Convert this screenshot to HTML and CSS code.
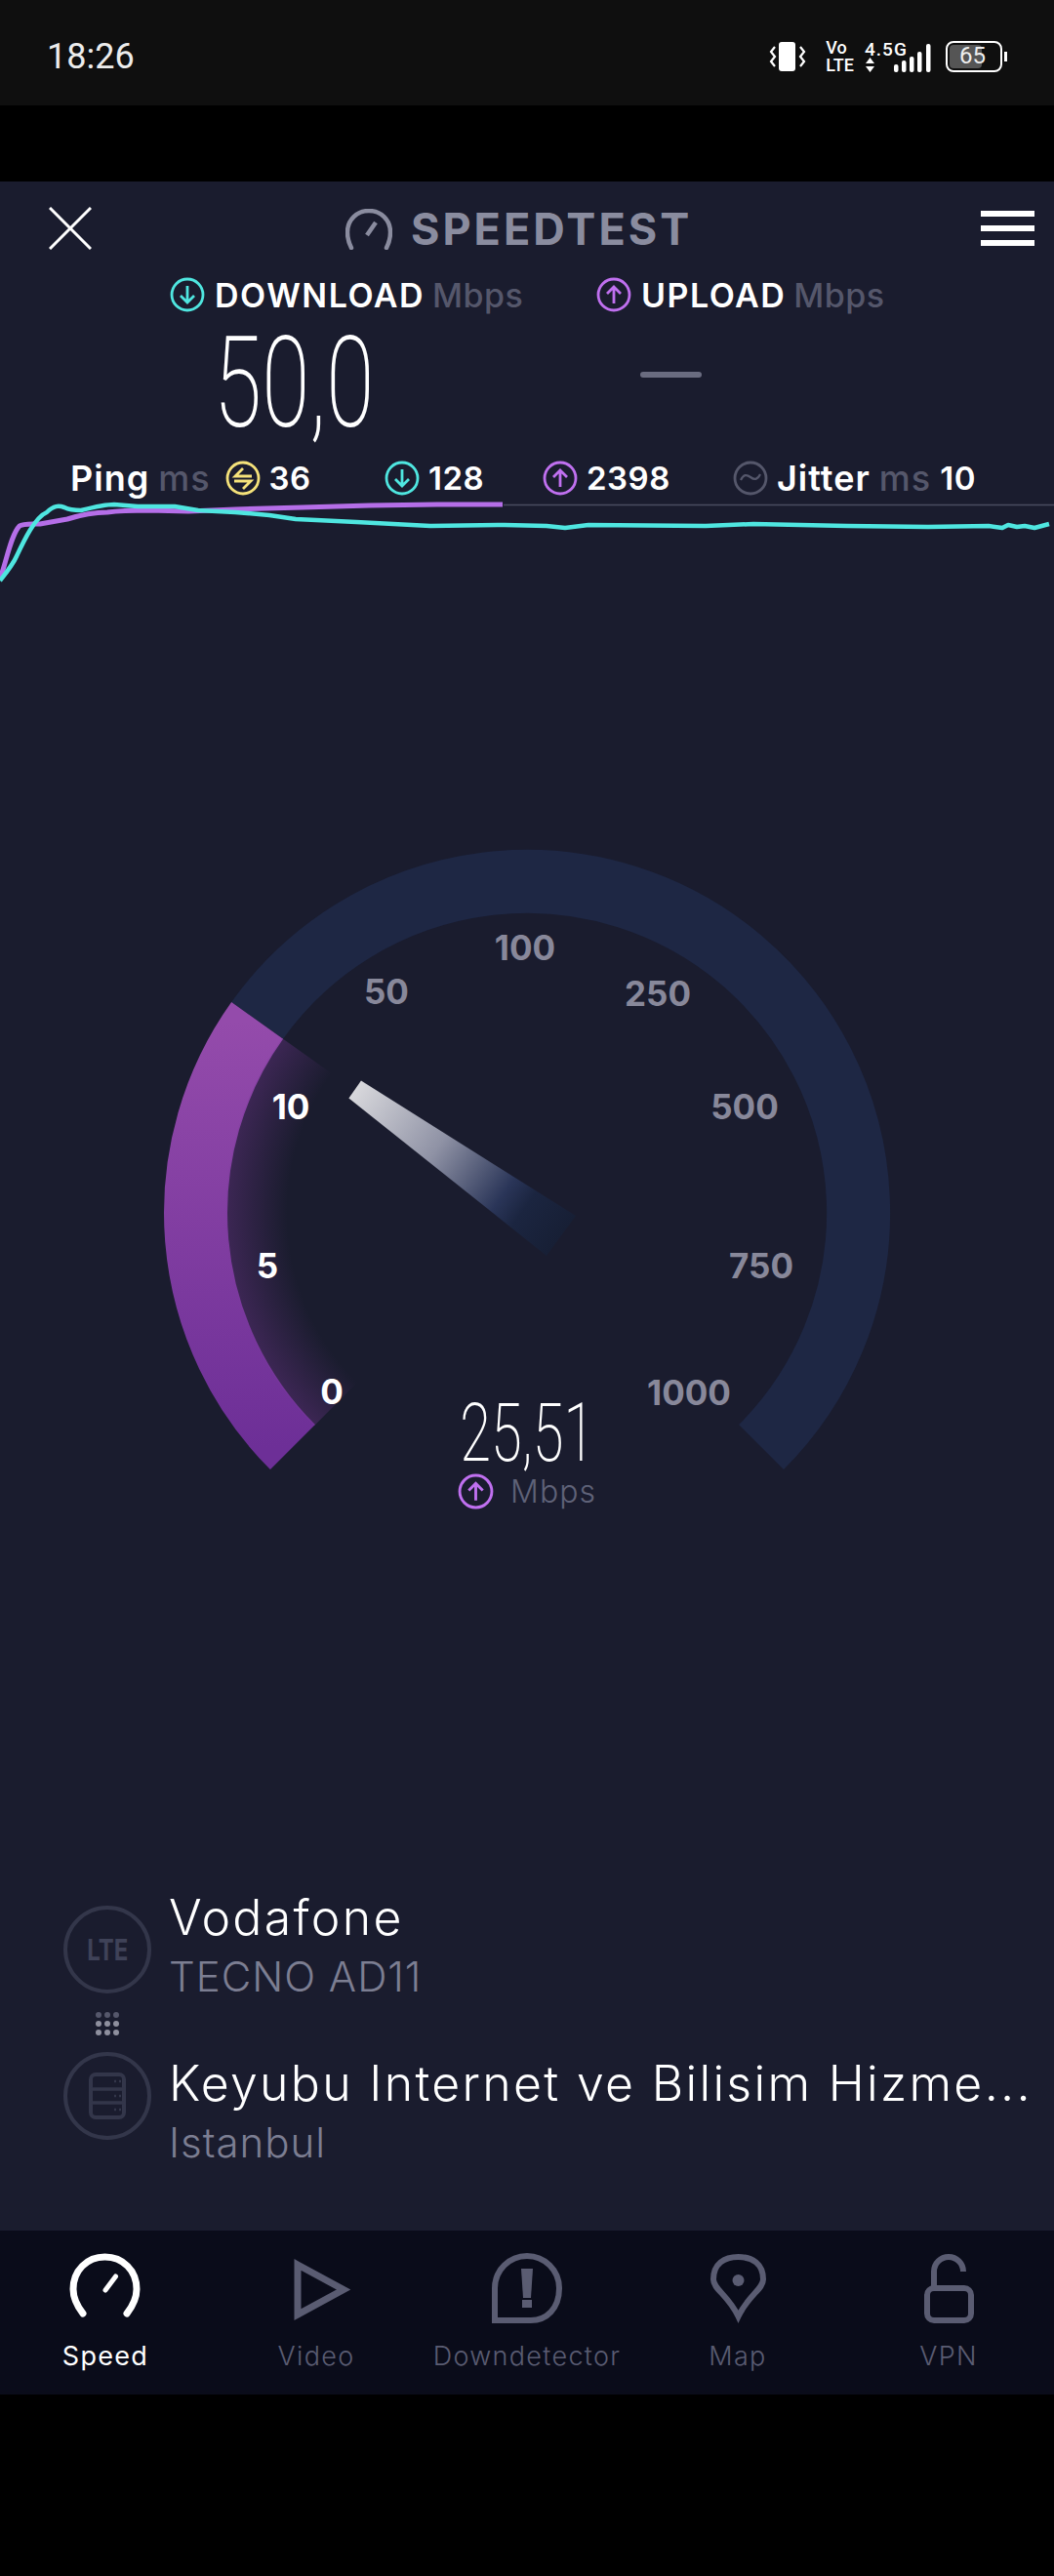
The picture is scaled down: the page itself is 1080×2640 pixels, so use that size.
FILE: index.html
```html
<!DOCTYPE html>
<html lang="en">
<head>
  <meta charset="UTF-8">
  <meta name="viewport" content="width=device-width, initial-scale=1.0">
  <title>Speedtest</title>
  <link rel="stylesheet" href="styles.css">
</head>
<body>
  <svg class="defs" width="0" height="0">
    <symbol id="ic-down" viewBox="0 0 36 36">
      <circle cx="18" cy="18" r="16" fill="none" stroke="currentColor" stroke-width="2.8"/>
      <path d="M18 9v17M11 19l7 7 7-7" fill="none" stroke="currentColor" stroke-width="2.8"/>
    </symbol>
    <symbol id="ic-up" viewBox="0 0 36 36">
      <circle cx="18" cy="18" r="16" fill="none" stroke="currentColor" stroke-width="2.8"/>
      <path d="M18 27V10M11 17l7-7 7 7" fill="none" stroke="currentColor" stroke-width="2.8"/>
    </symbol>
  </svg>

  <!-- Status bar -->
  <div class="status-bar">
    <span class="clock">18:26</span>
    <div class="status-icons">
      <svg class="ic-vibrate" width="38" height="32" viewBox="0 0 38 32">
        <rect x="10" y="1" width="17" height="30" rx="3" fill="#fff"/>
        <path d="M6 6L2 11l4 5-4 5 4 5M32 6l4 5-4 5 4 5-4 5" fill="none" stroke="#fff" stroke-width="2.2"/>
      </svg>
      <div class="stack">
        <span>Vo</span>
        <span>LTE</span>
      </div>
      <div class="net">
        <span>4.5G</span>
        <div class="net-low">
          <svg width="9" height="15" viewBox="0 0 9 15">
            <path d="M4.5 0L9 6H0zM0 9h9l-4.5 6z" fill="#fff"/>
          </svg>
          <svg class="ic-signal" width="38" height="29" viewBox="0 0 38 29">
            <g fill="#fff">
              <rect x="0" y="21" width="4.5" height="8" rx="2"/>
              <rect x="8" y="17" width="4.5" height="12" rx="2"/>
              <rect x="16" y="13" width="4.5" height="16" rx="2"/>
              <rect x="24" y="8" width="4.5" height="21" rx="2"/>
              <rect x="33" y="0" width="4.5" height="29" rx="2"/>
            </g>
          </svg>
        </div>
      </div>
      <div class="battery">
        <div class="battery-fill"></div>
        <span class="battery-num">65</span>
      </div>
      <div class="battery-nub"></div>
    </div>
  </div>
  <div class="gap"></div>

  <div class="app">
    <!-- Header -->
    <div class="header">
      <svg class="ic-close" width="44" height="44" viewBox="0 0 44 44">
        <path d="M1 1l42 42M43 1L1 43" stroke="#fff" stroke-width="3"/>
      </svg>
      <div class="title">
        <svg width="48" height="42" viewBox="0 0 48 42">
          <path d="M6 40C3 34 2 29 2 24 2 11 12 2 24 2s22 9 22 22c0 5-1 10-4 16" fill="none" stroke="#8a8c9f" stroke-width="4.5" stroke-linecap="round"/>
          <path d="M31 14l-9 13" stroke="#8a8c9f" stroke-width="4.5"/>
        </svg>
        <span>SPEEDTEST</span>
      </div>
      <div class="menu">
        <div></div>
        <div></div>
        <div></div>
      </div>
    </div>

    <!-- Download / upload -->
    <div class="speeds">
      <div class="speed-col down-col">
        <div class="speed-label">
          <svg class="cyan" width="36" height="36"><use href="#ic-down"/></svg>
          <b>DOWNLOAD</b><span>Mbps</span>
        </div>
        <div class="big-num">50,0</div>
      </div>
      <div class="speed-col up-col">
        <div class="speed-label">
          <svg class="purple" width="36" height="36"><use href="#ic-up"/></svg>
          <b>UPLOAD</b><span>Mbps</span>
        </div>
        <div class="dash"></div>
      </div>
    </div>

    <!-- Ping row -->
    <div class="stats">
      <div class="stat">
        <b class="word">Ping</b><span>ms</span>
        <svg class="yellow" width="36" height="36" viewBox="0 0 36 36">
          <circle cx="18" cy="18" r="16" fill="none" stroke="currentColor" stroke-width="2.8"/>
          <path d="M27 16H10l8-8M9 21h17l-8 8" fill="none" stroke="currentColor" stroke-width="2.8"/>
        </svg>
        <b>36</b>
      </div>
      <div class="stat">
        <svg class="cyan" width="36" height="36"><use href="#ic-down"/></svg>
        <b>128</b>
      </div>
      <div class="stat">
        <svg class="purple" width="36" height="36"><use href="#ic-up"/></svg>
        <b>2398</b>
      </div>
      <div class="stat">
        <svg class="grey" width="36" height="36" viewBox="0 0 36 36">
          <circle cx="18" cy="18" r="16" fill="none" stroke="currentColor" stroke-width="2.8"/>
          <path d="M8 20c3-6 6-6 10-3s7 3 10-3" fill="none" stroke="currentColor" stroke-width="2.2"/>
        </svg>
        <b class="word">Jitter</b><span>ms</span><b>10</b>
      </div>
    </div>

    <!-- Graph -->
    <svg class="graph" width="1080" height="92" viewBox="0 508 1080 92">
      <path d="M516 517.5H1080" stroke="#4a4c60" stroke-width="1.5"/>
      <path d="M0 593C6 578 11 548 20 539 24 536 34 537 41 537L69 532C85 527 100 525 110 525 125 523 140 523 152 523L193 524 241 522 310 520 379 518 448 517 515 517" fill="none" stroke="#b56ee8" stroke-width="5" stroke-linejoin="round"/>
      <path d="M0 595C8 585 14 577 17 570 25 553 36 530 48 525 55 518 60 518 66 520 72 523 78 523 83 523 95 520 108 517 117 517L141 519 179 519 203 523 241 525 276 528 303 532 324 533 365 535 441 539 517 538 560 539 579 541 603 538 723 539 772 537 868 539 951 540 1013 539 1027 541 1033 538 1042 540 1050 539 1060 541 1075 537" fill="none" stroke="#4fe6e0" stroke-width="4.5" stroke-linejoin="round"/>
    </svg>

    <!-- Gauge -->
    <div class="gauge">
      <svg width="1080" height="960" viewBox="0 0 1080 960">
        <defs>
          <linearGradient id="arcFill" x1="0" y1="0" x2="0" y2="1">
            <stop offset="0" stop-color="#944bab"/>
            <stop offset="1" stop-color="#6d2f97"/>
          </linearGradient>
          <radialGradient id="arcGlow" gradientUnits="userSpaceOnUse" cx="540" cy="643" r="307">
            <stop offset="0.8" stop-color="#7d3a9c" stop-opacity="0"/>
            <stop offset="1" stop-color="#7d3a9c" stop-opacity="0.34"/>
          </radialGradient>
          <linearGradient id="needleFill" gradientUnits="userSpaceOnUse" x1="364" y1="516" x2="575" y2="666">
            <stop offset="0" stop-color="#d8d8dc"/>
            <stop offset="0.4" stop-color="#8f92a5"/>
            <stop offset="0.72" stop-color="#2a3558"/>
            <stop offset="0.82" stop-color="#1b2540"/>
            <stop offset="1" stop-color="#171f35"/>
          </linearGradient>
        </defs>
        <path d="M263.6 445.9A339.5 339.5 0 1 1 780.06 883.06" fill="none" stroke="#1e2744" stroke-width="65"/>
        <path d="M299.94 883.06A339.5 339.5 0 0 1 263.6 445.9" fill="none" stroke="url(#arcFill)" stroke-width="65"/>
        <path d="M349 834A270 270 0 0 1 320 486" fill="none" stroke="url(#arcGlow)" stroke-width="76"/>
        <polygon points="370,507.5 357.4,525.4 560,687 590,646" fill="url(#needleFill)"/>
        <g class="ticks">
          <text x="298" y="547" class="on">10</text>
          <text x="274" y="710" class="on">5</text>
          <text x="340" y="839" class="on">0</text>
          <text x="396" y="429">50</text>
          <text x="538" y="384">100</text>
          <text x="674" y="431">250</text>
          <text x="763" y="547">500</text>
          <text x="780" y="710">750</text>
          <text x="706" y="840">1000</text>
        </g>
      </svg>
      <div class="reading">
        <div class="reading-num">25,51</div>
        <div class="reading-unit">
          <svg class="purple" width="37" height="37"><use href="#ic-up"/></svg>
          <span>Mbps</span>
        </div>
      </div>
    </div>

    <!-- Provider and server -->
    <div class="servers">
      <div class="server first">
        <div class="ring"><span class="lte">LTE</span></div>
        <div class="info">
          <div class="info-name">Vodafone</div>
          <div class="info-sub">TECNO AD11</div>
        </div>
      </div>
      <div class="dots">
        <i class="dim"></i><i class="dim"></i><i class="dim"></i>
        <i></i><i></i><i></i>
        <i></i><i></i><i></i>
      </div>
      <div class="server second">
        <div class="ring">
          <svg width="38" height="48" viewBox="0 0 38 48">
            <rect x="2" y="2" width="34" height="44" rx="5" fill="none" stroke="#33364a" stroke-width="4"/>
            <path d="M2 17h34M2 31h34" stroke="#33364a" stroke-width="3.5"/>
            <path d="M26 9h2M31 9h2M26 24h2M31 24h2M26 38h2M31 38h2" stroke="#33364a" stroke-width="2.5"/>
          </svg>
        </div>
        <div class="info">
          <div class="info-name">Keyubu Internet ve Bilisim Hizme...</div>
          <div class="info-sub">Istanbul</div>
        </div>
      </div>
    </div>
  </div>

  <!-- Bottom tabs -->
  <div class="tabs">
    <div class="tab active">
      <svg width="80" height="76" viewBox="0 0 80 76">
        <path d="M17 63C10 54 7 47 7 38 7 19 21 5 39.500 5S72 19 72 38c0 9-3 16-10 25" fill="none" stroke="#fff" stroke-width="7" stroke-linecap="round"/>
        <path d="M50.500 25L40 39" stroke="#fff" stroke-width="5" stroke-linecap="round"/>
      </svg>
      <span>Speed</span>
    </div>
    <div class="tab">
      <svg width="80" height="76" viewBox="0 0 80 76">
        <path d="M21 13L68 38.500 21 64Z" fill="none" stroke="#5a5c72" stroke-width="7"/>
      </svg>
      <span>Video</span>
    </div>
    <div class="tab">
      <svg width="80" height="76" viewBox="0 0 80 76">
        <path d="M7 70V37A33 33 0 0 1 73 37C73 58 60 70 44 70Z" fill="none" stroke="#5a5c72" stroke-width="6"/>
        <path d="M34 17h12l-2 30h-8z" fill="#5a5c72"/>
        <rect x="35" y="49" width="10" height="8" fill="#5a5c72"/>
      </svg>
      <span>Downdetector</span>
    </div>
    <div class="tab">
      <svg width="80" height="76" viewBox="0 0 80 76">
        <path d="M40.500 66C30 44 15 38 15 28 15 12 26 5 40.500 5S66 12 66 28C66 38 51 44 40.500 66Z" fill="none" stroke="#5a5c72" stroke-width="6"/>
        <circle cx="40.500" cy="29" r="6" fill="#5a5c72"/>
      </svg>
      <span>Map</span>
    </div>
    <div class="tab">
      <svg width="80" height="76" viewBox="0 0 80 76">
        <rect x="18" y="37" width="45" height="33" rx="7" fill="none" stroke="#5a5c72" stroke-width="6"/>
        <path d="M25 36V20A15 15 0 0 1 55 20" fill="none" stroke="#5a5c72" stroke-width="6"/>
      </svg>
      <span>VPN</span>
    </div>
  </div>
</body>
</html>
```

FILE: styles.css
```css
* {
  box-sizing: border-box;
}

body {
  margin: 0;
  width: 1080px;
  height: 2640px;
  background-color: #000;
  color: #fff;
  font-family: Inter, "Noto Sans", sans-serif;
  overflow: hidden;
}

.defs {
  display: block;
  height: 0;
}

.cyan { color: #4fe6e0; }
.purple { color: #c070f0; }
.yellow { color: #f5e27a; }
.grey { color: #55576b; }

/* status bar */
.status-bar {
  height: 108px;
  background-color: #0f0f0f;
  display: flex;
  align-items: center;
  justify-content: space-between;
  padding: 7px 48px 0 48px;
  font-family: Roboto, sans-serif;
}

.clock {
  font-size: 36px;
  color: #ececec;
}

.status-icons {
  display: flex;
  align-items: center;
}

.ic-vibrate {
  margin-right: 20px;
}

.stack {
  display: flex;
  flex-direction: column;
  font-size: 18px;
  line-height: 18px;
  font-weight: 500;
  margin-right: 11px;
}

.net {
  font-size: 19px;
  line-height: 17px;
  font-weight: 500;
  letter-spacing: 1px;
  width: 68px;
  position: relative;
  height: 32px;
  margin-right: 15px;
}

.net span {
  display: block;
  height: 17px;
  overflow: visible;
}

.net-low {
  position: absolute;
  left: 1px;
  bottom: 0;
  display: flex;
  align-items: flex-end;
  width: 67px;
}

.ic-signal {
  margin-left: 20px;
}

.battery {
  width: 58px;
  height: 32px;
  border: 2.500px solid #fff;
  border-radius: 8px;
  position: relative;
}

.battery-fill {
  position: absolute;
  left: 2px;
  top: 2px;
  bottom: 2px;
  width: 33px;
  background-color: #555;
  border-radius: 4px;
}

.battery-num {
  position: absolute;
  left: 12px;
  top: 0;
  line-height: 27px;
  font-size: 24px;
  color: #eee;
}

.battery-nub {
  width: 3px;
  height: 10px;
  margin-left: 2px;
  background-color: #fff;
}

.gap {
  height: 78px;
}

/* app body */
.app {
  height: 2100px;
  background-color: #1a1c2e;
  display: flex;
  flex-direction: column;
}

.header {
  height: 96px;
  display: flex;
  align-items: center;
  justify-content: space-between;
  padding: 0 20px 0 50px;
  position: relative;
}

.title {
  position: absolute;
  left: 354px;
  top: 21px;
  display: flex;
  align-items: center;
  gap: 19px;
  font-size: 45px;
  font-weight: 700;
  letter-spacing: 3px;
  color: #8a8c9f;
}

.menu div {
  width: 55px;
  height: 6px;
  margin: 9px 0;
  background-color: #fff;
}

.speeds {
  display: flex;
  height: 186px;
  padding-left: 174px;
}

.speed-col {
  width: 437px;
}

.up-col {
  width: 469px;
}

.speed-label {
  display: flex;
  align-items: center;
  height: 40px;
  font-size: 34px;
}

.speed-label svg {
  margin-right: 10px;
}

.speed-label b {
  font-weight: 600;
  letter-spacing: 1.500px;
  margin-right: 8px;
}

.speed-label span {
  color: #55576b;
  font-weight: 500;
  letter-spacing: 0.500px;
}

.big-num {
  margin-left: 45px;
  font-family: Roboto, sans-serif;
  font-size: 130px;
  font-weight: 200;
  line-height: 142px;
  transform: scaleX(0.687);
  transform-origin: left;
}

.dash {
  width: 63px;
  height: 6px;
  margin: 59px 0 0 45px;
  background-color: #6a6c80;
  border-radius: 3px;
}

.stats {
  display: grid;
  grid-template-columns: 322px 162px 195px auto;
  height: 40px;
  padding-left: 72px;
  font-size: 33px;
}

.stat {
  display: flex;
  align-items: center;
  gap: 9px;
}

.stat b {
  font-weight: 600;
  letter-spacing: 0.500px;
}

.stat b.word {
  font-size: 36px;
  letter-spacing: 1px;
}

.stat span {
  color: #55576b;
  font-size: 36px;
  font-weight: 500;
  letter-spacing: 1px;
}

.stat .yellow {
  margin-left: 6px;
}

.graph {
  display: block;
}

/* gauge */
.gauge {
  position: relative;
  height: 960px;
}

.gauge svg {
  display: block;
}

.ticks text {
  font-family: Inter, sans-serif;
  font-size: 35px;
  font-weight: 700;
  fill: #88889a;
  text-anchor: middle;
}

.ticks text.on {
  fill: #fff;
}

.reading {
  position: absolute;
  left: 0;
  right: 0;
  top: 829px;
  display: flex;
  flex-direction: column;
  align-items: center;
}

.reading-num {
  font-family: Roboto, sans-serif;
  font-size: 83px;
  font-weight: 200;
  line-height: 80px;
  transform: scaleX(0.695);
}

.reading-unit {
  display: flex;
  align-items: center;
  gap: 17px;
  font-size: 32px;
  font-weight: 300;
  color: #5f6278;
  letter-spacing: 1px;
}

/* provider / server */
.servers {
  margin-top: auto;
  padding: 0 0 93px 65px;
}

.server {
  display: flex;
  align-items: center;
  height: 90px;
}

.ring {
  width: 90px;
  height: 90px;
  border: 4px solid #33364a;
  border-radius: 50%;
  flex: none;
  display: flex;
  align-items: center;
  justify-content: center;
}

.lte {
  font-size: 30px;
  font-weight: 700;
  color: #3f4258;
  transform: scaleX(0.8);
}

.info {
  margin-left: 18px;
  white-space: nowrap;
}

.first .info {
  margin-bottom: 6px;
}

.second .info {
  margin-top: 34px;
}

.info-name {
  font-size: 50px;
  font-weight: 300;
  line-height: 62px;
  letter-spacing: 2.300px;
}

.info-sub {
  font-size: 42px;
  font-weight: 300;
  line-height: 60px;
  letter-spacing: 1px;
  color: #7c7e92;
}

.dots {
  display: grid;
  grid-template-columns: repeat(3, 6px);
  gap: 3px;
  width: 24px;
  margin: 19px 0 17px 33px;
}

.dots i {
  width: 6px;
  height: 6px;
  border-radius: 50%;
  background-color: #8e8f9e;
}

.dots i.dim {
  background-color: #55576b;
}

/* bottom tabs */
.tabs {
  height: 168px;
  background-color: #0a0c1a;
  display: grid;
  grid-template-columns: repeat(5, 216px);
  padding-top: 22px;
}

.tab {
  display: flex;
  flex-direction: column;
  align-items: center;
  color: #5a5c72;
  font-size: 27px;
  font-weight: 300;
  letter-spacing: 1.300px;
}

.tab svg {
  margin-bottom: 14px;
  overflow: visible;
}

.tab span {
  line-height: 34px;
}

.tab.active {
  color: #fff;
  font-weight: 400;
}
```
